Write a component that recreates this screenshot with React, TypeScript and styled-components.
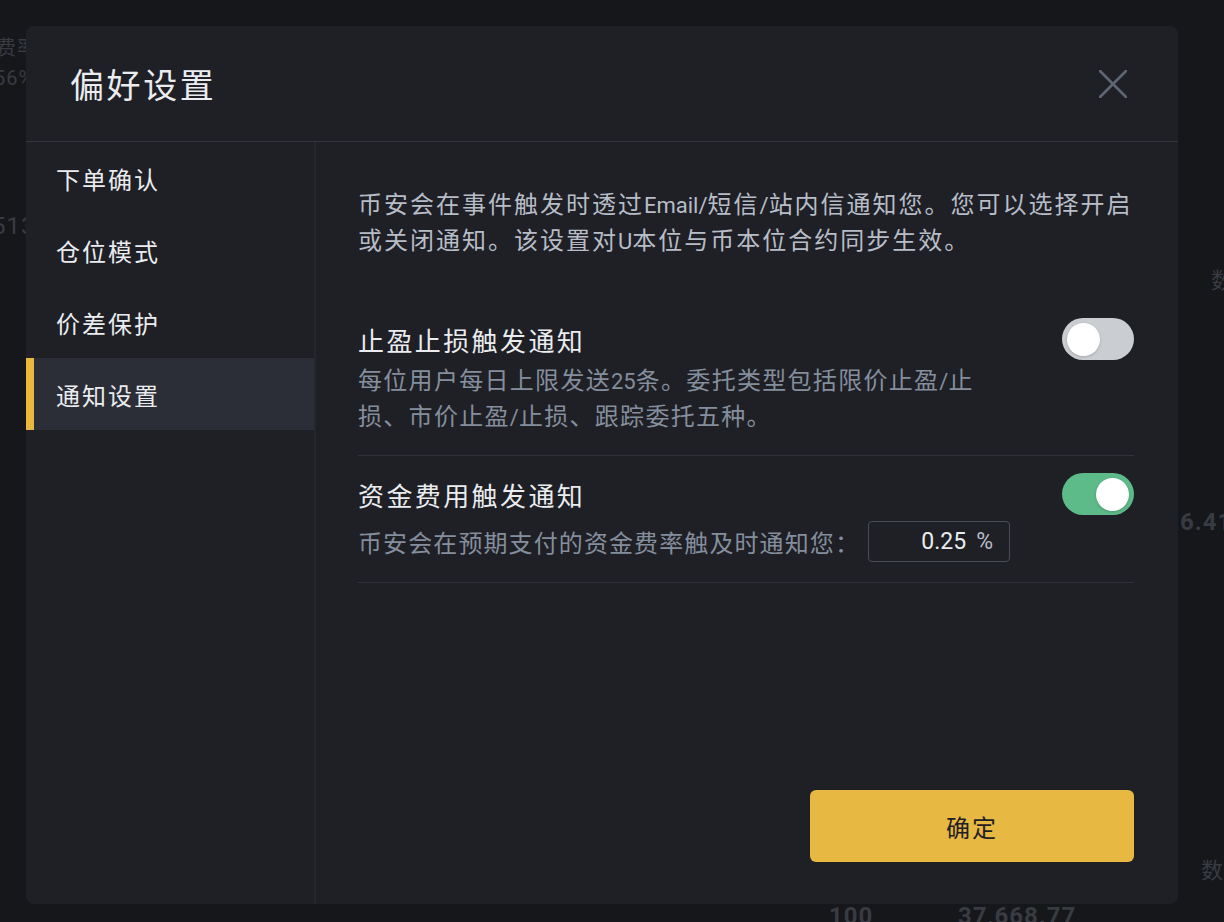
import React, { useState } from "react";
import styled, { createGlobalStyle } from "styled-components";

const Global = createGlobalStyle`
  html, body { margin: 0; padding: 0; background: #16171b; }
  body { font-family: "Roboto", "Noto Sans CJK SC", sans-serif; }
  * { box-sizing: border-box; }
`;

const Page = styled.div`
  position: relative;
  width: 1224px;
  height: 922px;
  overflow: hidden;
  background: #16171b;
  padding: 26px 46px 18px 26px;
  display: flex;
`;

const Ghost = styled.span<{ $size: number; $weight?: number }>`
  position: absolute;
  color: #383b42;
  font-size: ${(p) => p.$size}px;
  font-weight: ${(p) => p.$weight ?? 400};
  white-space: nowrap;
  letter-spacing: 1px;
`;

const Modal = styled.div`
  position: relative;
  z-index: 1;
  flex: 1;
  background: #1f2026;
  border-radius: 8px;
  display: flex;
  flex-direction: column;
  overflow: hidden;
`;

const Header = styled.header`
  flex: none;
  height: 116px;
  display: flex;
  align-items: center;
  justify-content: space-between;
  padding: 0 51px 0 44px;
  border-bottom: 1px solid #33363d;
`;

const Title = styled.h1`
  margin: 0;
  font-size: 34px;
  font-weight: 400;
  letter-spacing: 2.6px;
  color: #eaecef;
`;

const CloseButton = styled.button`
  width: 28px;
  height: 28px;
  padding: 0;
  border: 0;
  background: none;
  cursor: pointer;
  display: flex;
`;

const Body = styled.div`
  flex: 1;
  display: grid;
  grid-template-columns: 290px 1fr;
`;

const Sidebar = styled.nav`
  border-right: 2px solid #25272d;
  display: flex;
  flex-direction: column;
`;

const NavItem = styled.div<{ $active?: boolean }>`
  height: 72px;
  display: flex;
  align-items: center;
  padding-left: 30px;
  font-size: 24px;
  letter-spacing: 2px;
  color: #eaecef;
  background: ${(p) => (p.$active ? "#2b2e36" : "transparent")};
  box-shadow: ${(p) => (p.$active ? "inset 8px 0 0 #e8b83f" : "none")};
`;

const Content = styled.section`
  display: flex;
  flex-direction: column;
  padding: 45px 44px 42px 42px;
`;

const Intro = styled.p`
  margin: 0 -14px 0 0;
  font-size: 24px;
  line-height: 36px;
  letter-spacing: 2px;
  color: #b7bdc6;
`;

const Latin = styled.span`
  font-size: 22px;
  line-height: 1;
  letter-spacing: 0;
`;

const SettingList = styled.div`
  margin-top: 41px;
  display: flex;
  flex-direction: column;
`;

const Setting = styled.div`
  padding: 18px 0 20px;
  border-bottom: 1px solid #2e3138;
  &:not(:first-child) {
    padding-top: 17px;
  }
`;

const SettingHead = styled.div`
  height: 42px;
  display: flex;
  align-items: center;
  justify-content: space-between;
`;

const SettingTitle = styled.div`
  font-size: 26px;
  letter-spacing: 2.4px;
  color: #eaecef;
`;

const SubText = styled.div<{ $gap: number }>`
  margin-top: ${(p) => p.$gap}px;
  max-width: 636px;
  font-size: 24px;
  line-height: 36px;
  letter-spacing: 1.3px;
  color: #848e9c;
`;

const InlineRow = styled.div`
  margin-top: 6px;
  display: flex;
  align-items: center;
  font-size: 24px;
  letter-spacing: 1.1px;
  color: #848e9c;
`;

const RateBox = styled.div`
  margin-left: 8px;
  width: 142px;
  height: 41px;
  border: 1px solid #474d57;
  border-radius: 4px;
  display: flex;
  align-items: center;
  justify-content: flex-end;
  gap: 10px;
  padding-right: 16px;
  letter-spacing: 0;
`;

const RateValue = styled.span`
  font-size: 23px;
  font-weight: 400;
  color: #eaecef;
`;

const RateUnit = styled.span`
  font-size: 23px;
  color: #b7bdc6;
`;

const Track = styled.button<{ $on: boolean }>`
  flex: none;
  width: 72px;
  height: 42px;
  border: 0;
  border-radius: 21px;
  padding: 0 5px;
  cursor: pointer;
  display: flex;
  align-items: center;
  justify-content: ${(p) => (p.$on ? "flex-end" : "flex-start")};
  background: ${(p) => (p.$on ? "#5dba89" : "#cacdd1")};
`;

const Knob = styled.span`
  width: 33px;
  height: 33px;
  border-radius: 50%;
  background: #ffffff;
  box-shadow: 0 1px 3px rgba(0, 0, 0, 0.18);
`;

const Spacer = styled.div`
  flex: 1;
`;

const Footer = styled.div`
  display: flex;
  justify-content: flex-end;
`;

const ConfirmButton = styled.button`
  width: 324px;
  height: 72px;
  border: 0;
  border-radius: 6px;
  background: #e7b942;
  color: #1e2026;
  font-family: "Roboto", "Noto Sans CJK SC", sans-serif;
  font-size: 24px;
  letter-spacing: 2px;
  cursor: pointer;
`;

function Toggle({ on, onClick }: { on: boolean; onClick: () => void }) {
  return (
    <Track $on={on} onClick={onClick} aria-pressed={on}>
      <Knob />
    </Track>
  );
}

export default function App() {
  const [tpsl, setTpsl] = useState(false);
  const [funding, setFunding] = useState(true);
  const nav = ["下单确认", "仓位模式", "价差保护", "通知设置"];
  return (
    <Page>
      <Global />
      <Ghost $size={20} style={{ left: -4, top: 32 }}>费率</Ghost>
      <Ghost $size={20} style={{ left: -6, top: 66 }}>56%</Ghost>
      <Ghost $size={24} style={{ left: -8, top: 212 }}>513</Ghost>
      <Ghost $size={22} style={{ left: 1211, top: 262 }}>数</Ghost>
      <Ghost $size={24} $weight={700} style={{ left: 1180, top: 508 }}>6.41</Ghost>
      <Ghost $size={22} style={{ left: 1201, top: 852 }}>数</Ghost>
      <Ghost $size={24} $weight={700} style={{ left: 829, top: 902 }}>100</Ghost>
      <Ghost $size={24} $weight={700} style={{ left: 958, top: 902 }}>37,668.77</Ghost>
      <Modal>
        <Header>
          <Title>偏好设置</Title>
          <CloseButton aria-label="close">
            <svg width="28" height="28" viewBox="0 0 28 28">
              <path d="M1 1L27 27M27 1L1 27" stroke="#5e6673" strokeWidth="2.6" strokeLinecap="round" />
            </svg>
          </CloseButton>
        </Header>
        <Body>
          <Sidebar>
            {nav.map((n, i) => (
              <NavItem key={n} $active={i === 3}>
                {n}
              </NavItem>
            ))}
          </Sidebar>
          <Content>
            <Intro>
              币安会在事件触发时透过<Latin>Email/</Latin>短信<Latin>/</Latin>站内信通知您。您可以选择开启或关闭通知。该设置对<Latin>U</Latin>本位与币本位合约同步生效。
            </Intro>
            <SettingList>
              <Setting>
                <SettingHead>
                  <SettingTitle>止盈止损触发通知</SettingTitle>
                  <Toggle on={tpsl} onClick={() => setTpsl(!tpsl)} />
                </SettingHead>
                <SubText $gap={3}>
                  每位用户每日上限发送<Latin>25</Latin>条。委托类型包括限价止盈<Latin>/</Latin>止损、市价止盈<Latin>/</Latin>止损、跟踪委托五种。
                </SubText>
              </Setting>
              <Setting>
                <SettingHead>
                  <SettingTitle>资金费用触发通知</SettingTitle>
                  <Toggle on={funding} onClick={() => setFunding(!funding)} />
                </SettingHead>
                <InlineRow>
                  币安会在预期支付的资金费率触及时通知您：
                  <RateBox>
                    <RateValue>0.25</RateValue>
                    <RateUnit>%</RateUnit>
                  </RateBox>
                </InlineRow>
              </Setting>
            </SettingList>
            <Spacer />
            <Footer>
              <ConfirmButton>确定</ConfirmButton>
            </Footer>
          </Content>
        </Body>
      </Modal>
    </Page>
  );
}
